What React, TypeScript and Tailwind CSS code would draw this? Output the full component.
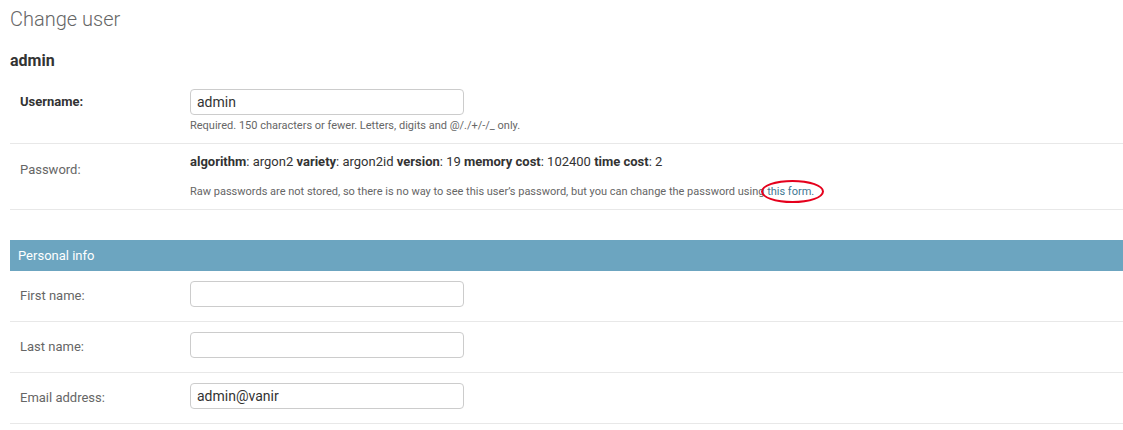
import React from 'react';

const labelCls = 'w-[170px] shrink-0 text-[13px] leading-[16px]';

const TextInput: React.FC<{ value?: string }> = ({ value = '' }) => (
  <input
    type="text"
    defaultValue={value}
    className="w-[274px] h-[26px] px-[6px] border border-[#cccccc] rounded-[4px] text-[14px] text-[#333] bg-white outline-none"
  />
);

const PlainRow: React.FC<{ label: string; value?: string }> = ({ label, value }) => (
  <div className="flex px-[10px] py-[10px] h-[51px] border-b border-[#e8e8e8]">
    <label className={`${labelCls} pt-[7px] text-[#666]`}>{label}</label>
    <TextInput value={value} />
  </div>
);

export default function App() {
  return (
    <div className="min-h-screen bg-white pl-[10px] font-['Roboto',sans-serif] text-[#333]">
      <h1 className="pt-[7px] text-[20px] leading-[24px] font-light text-[#666]">Change user</h1>
      <h2 className="mt-[20px] text-[16px] leading-[20px] font-bold text-[#333]">admin</h2>

      <fieldset className="mt-[8px]">
        <div className="flex px-[10px] py-[10px] border-b border-[#e8e8e8]">
          <label className={`${labelCls} pt-[5px] font-bold text-[#333]`}>Username:</label>
          <div>
            <TextInput value="admin" />
            <p className="mt-[4px] text-[11px] leading-[14px] text-[#666]">
              Required. 150 characters or fewer. Letters, digits and @/./+/-/_ only.
            </p>
          </div>
        </div>

        <div className="flex px-[10px] py-[10px] border-b border-[#e8e8e8]">
          <label className={`${labelCls} pt-[8px] text-[#666]`}>Password:</label>
          <div>
            <p className="text-[13px] leading-[16px] text-[#333]">
              <strong>algorithm</strong>: argon2 <strong>variety</strong>: argon2id{' '}
              <strong>version</strong>: 19 <strong>memory cost</strong>: 102400{' '}
              <strong>time cost</strong>: 2
            </p>
            <p className="mt-[15px] text-[11px] leading-[14px] text-[#666]">
              Raw passwords are not stored, so there is no way to see this user’s password, but you can
              change the password using{' '}
              <span className="relative">
                <a href="#" className="text-[#417893]">this form.</a>
                <span className="absolute -left-[6px] -right-[10px] -top-[5px] -bottom-[5px] rounded-[50%] border-2 border-[#e5001c]" />
              </span>
            </p>
          </div>
        </div>
      </fieldset>

      <fieldset className="mt-[30px]">
        <h2 className="px-[8px] py-[8px] text-[13px] leading-[15px] text-white bg-[#6ca5c0]">Personal info</h2>
        <PlainRow label="First name:" />
        <PlainRow label="Last name:" />
        <PlainRow label="Email address:" value="admin@vanir" />
      </fieldset>
    </div>
  );
}
